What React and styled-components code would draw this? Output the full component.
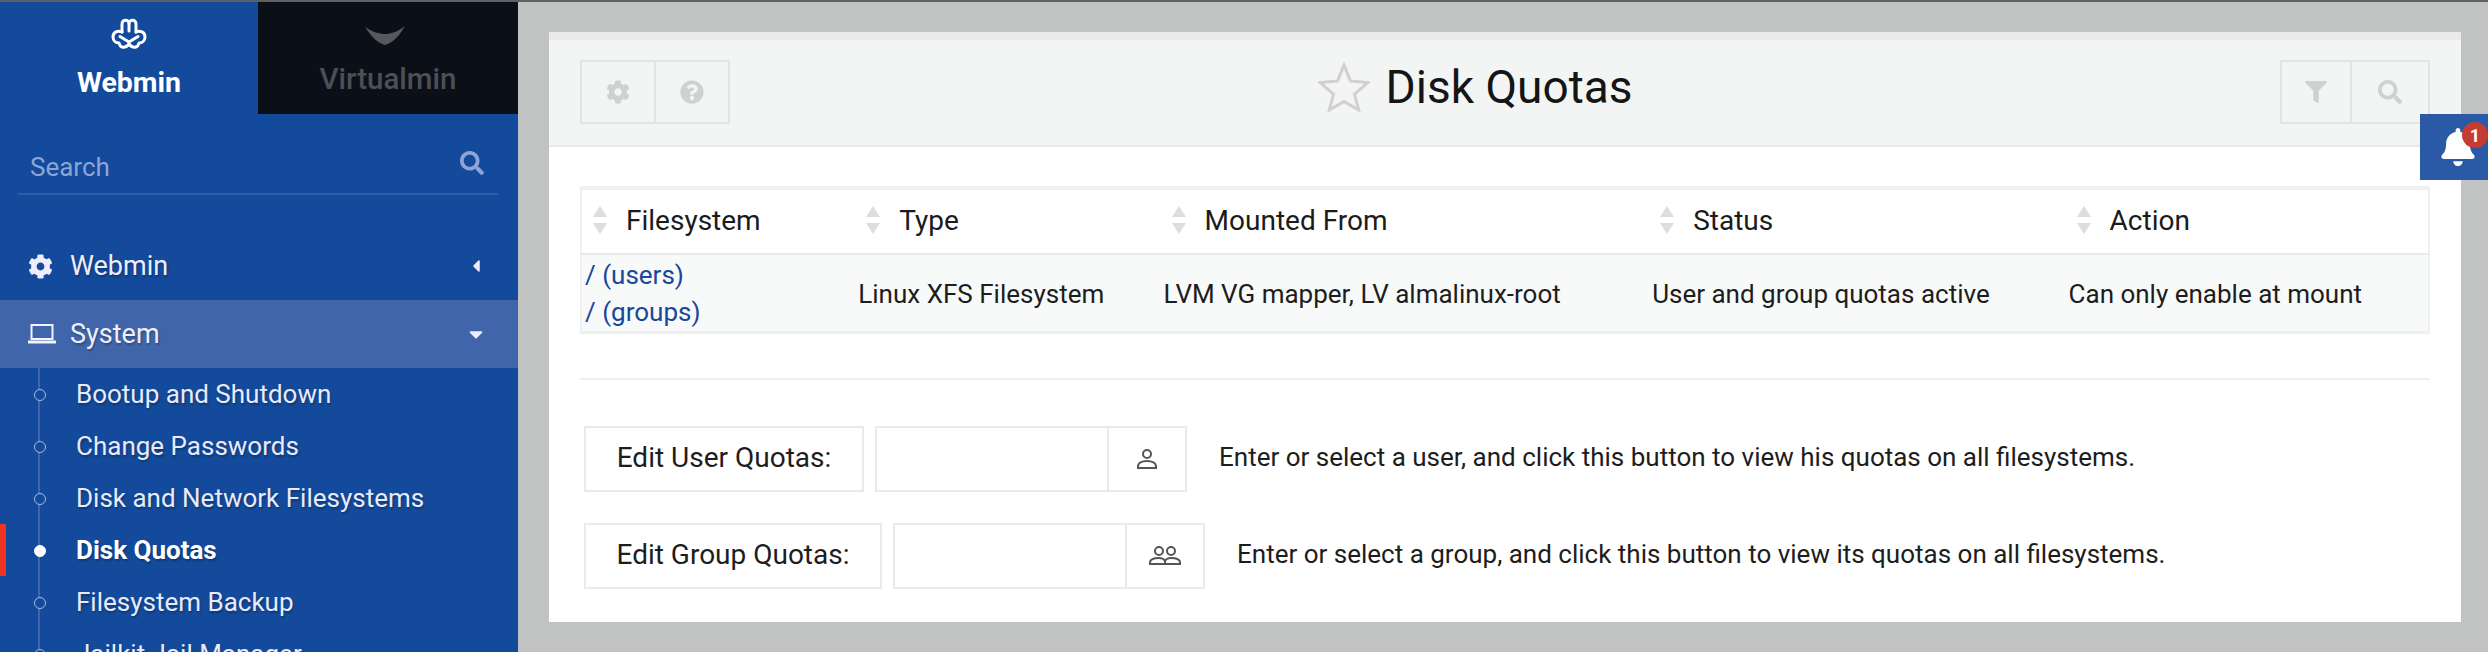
import React from "react";
import styled, { createGlobalStyle } from "styled-components";
import { FaCog, FaQuestionCircle, FaFilter, FaSearch, FaBell, FaCaretLeft, FaCaretDown } from "react-icons/fa";

const GlobalStyle = createGlobalStyle`
  html, body { margin: 0; padding: 0; height: 100%; overflow: hidden; }
  body { font-family: Roboto, "Liberation Sans", sans-serif; background: #c1c3c2; }
  * { box-sizing: border-box; }
`;

const Page = styled.div`
  height: 652px;
  display: flex;
  flex-direction: column;
  overflow: hidden;
`;

const TopStrip = styled.div`
  height: 2px;
  flex: none;
  background: #5e6064;
`;

const Body = styled.div`
  flex: 1;
  display: flex;
  min-height: 0;
  position: relative;
`;

const Sidebar = styled.aside`
  width: 518px;
  flex: none;
  background: #134a9b;
  overflow: hidden;
`;

const Tabs = styled.div`
  display: flex;
  height: 112px;
`;

const Tab = styled.div`
  width: ${(p) => (p.$active ? 258 : 260)}px;
  display: flex;
  flex-direction: column;
  align-items: center;
  padding-top: ${(p) => (p.$active ? 16 : 24)}px;
  background: ${(p) => (p.$active ? "transparent" : "#0b0f17")};
  color: ${(p) => (p.$active ? "#fff" : "#4c4f54")};
  font-size: ${(p) => (p.$active ? 28.5 : 29.5)}px;
  font-weight: ${(p) => (p.$active ? 700 : 500)};
  line-height: 32px;
`;

const TabLabel = styled.span`
  margin-top: ${(p) => p.$gap}px;
`;

const SearchBox = styled.div`
  margin: 0 20px 0 18px;
  height: 81px;
  padding: 39px 14px 0 12px;
  display: flex;
  justify-content: space-between;
  border-bottom: 2px solid #2f5ea8;
  color: #8ea4d6;
  font-size: 26px;
  line-height: 28px;
`;

const SearchGlass = styled(FaSearch)`
  margin-top: -2px;
`;

const MenuList = styled.nav`
  margin-top: 37px;
`;

const MenuRow = styled.div`
  height: 68px;
  display: flex;
  align-items: center;
  padding: 0 35px 0 28px;
  background: ${(p) => (p.$open ? "#4065aa" : "transparent")};
  color: #eeeefb;
  font-size: 27px;
  text-shadow: 1px 2px 2px rgba(0, 0, 0, 0.25);
`;

const MenuIcon = styled.span`
  width: 42px;
  display: flex;
  align-items: center;
`;

const MenuCaret = styled.span`
  margin-left: auto;
  width: 14px;
  display: flex;
  justify-content: center;
`;

const SubList = styled.ul`
  list-style: none;
  margin: 0;
  padding: 0;
`;

const SubItem = styled.li`
  height: 52px;
  display: flex;
  align-items: center;
  position: relative;
  padding-left: 76px;
  color: ${(p) => (p.$active ? "#fff" : "#e9eafa")};
  font-size: 26px;
  font-weight: ${(p) => (p.$active ? 700 : 400)};
  text-shadow: 1px 2px 2px rgba(0, 0, 0, 0.25);
  white-space: nowrap;

  &::before {
    content: "";
    position: absolute;
    left: 38px;
    top: 0;
    bottom: 0;
    width: 2px;
    background: #4065aa;
  }

  &::after {
    content: "";
    position: absolute;
    left: 34px;
    top: 21px;
    width: 10px;
    height: 10px;
    border-radius: 50%;
    border: 1.5px solid #a9b9dc;
    background: ${(p) => (p.$active ? "#fff" : "#134a9b")};
    border-color: ${(p) => (p.$active ? "#fff" : "#a9b9dc")};
  }
`;

const ActiveMark = styled.span`
  position: absolute;
  left: 0;
  top: 0;
  bottom: 0;
  width: 6px;
  background: #f03322;
`;

const Main = styled.main`
  flex: 1;
  padding: 30px 27px 30px 31px;
  min-width: 0;
`;

const Panel = styled.section`
  height: 590px;
  background: #fff;
  border-top: 8px solid #e8e9e8;
`;

const PanelHead = styled.header`
  height: 107px;
  display: grid;
  grid-template-columns: 150px 1fr 150px;
  align-items: center;
  padding: 0 31px;
  background: #f3f5f4;
  border-bottom: 2px solid #e8e9e9;
`;

const ButtonGroup = styled.div`
  display: flex;
  height: 64px;
  margin-top: -1px;
  width: 150px;
  border: 2px solid #e2e3e3;
`;

const HeadButton = styled.button`
  flex: ${(p) => p.$grow || 1};
  display: flex;
  align-items: center;
  justify-content: center;
  padding: 0;
  background: transparent;
  border: 0;
  color: #cfd0d0;

  & + & {
    border-left: 2px solid #e2e3e3;
  }
`;

const Title = styled.h1`
  margin: 0;
  display: flex;
  align-items: center;
  justify-content: center;
  gap: 16px;
  padding: 0 60px 12px 0;
  font-size: 46px;
  font-weight: 400;
  color: #151515;
`;

const PanelBody = styled.div`
  padding: 39px 31px 0;
`;

const Table = styled.table`
  width: 100%;
  table-layout: fixed;
  border-collapse: collapse;
  border-top: 4px solid #f0f0f0;
  border-left: 2px solid #eff0f0;
  border-right: 2px solid #eff0f0;
  border-bottom: 3px solid #eff0f0;
`;

const HeadCell = styled.th`
  height: 66px;
  padding: 0 0 3px 44px;
  position: relative;
  text-align: left;
  font-size: 28px;
  font-weight: 400;
  color: #1b1b1b;
  border-bottom: 2px solid #e9eaea;
`;

const SortIcon = styled.svg`
  position: absolute;
  left: 11px;
  top: 16px;
`;

const BodyCell = styled.td`
  height: 78px;
  padding: 2px 0 0 3px;
  background: #f8faf9;
  font-size: 26px;
  line-height: 36.5px;
  color: #1d1d1d;
`;

const MountLink = styled.a`
  display: block;
  color: #19479b;
`;

const Rule = styled.hr`
  margin: 44px 0 46px;
  border: 0;
  border-top: 2px solid #eeefef;
`;

const QuotaRow = styled.div`
  display: flex;
  align-items: center;
  padding-left: 4px;
  margin-bottom: 31px;
`;

const QuotaButton = styled.button`
  height: 66px;
  width: ${(p) => p.$width}px;
  padding: 0 0 2px;
  background: #fff;
  border: 2px solid #e9eaea;
  font-family: inherit;
  font-size: 28px;
  color: #1d1d1d;
`;

const InputGroup = styled.div`
  margin-left: 11px;
  width: 312px;
  height: 66px;
  display: flex;
  border: 2px solid #e9eaea;
`;

const QuotaInput = styled.input`
  width: 232px;
  border: 0;
  border-right: 2px solid #e9eaea;
  background: #fff;
`;

const PickerIcon = styled.span`
  flex: 1;
  display: flex;
  align-items: center;
  justify-content: center;
`;

const Hint = styled.span`
  margin: -3px 0 0 32px;
  font-size: 26px;
  color: #1d1d1d;
`;

const Bell = styled.div`
  position: absolute;
  right: 0;
  top: 112px;
  width: 68px;
  height: 66px;
  background: #2a5aa5;
  color: #fff;
  display: flex;
  align-items: center;
  justify-content: center;
  padding-left: 8px;
`;

const Badge = styled.span`
  position: absolute;
  left: 42px;
  top: 8px;
  width: 26px;
  height: 26px;
  border-radius: 50%;
  background: #c63c33;
  color: #fff;
  font-size: 18px;
  font-weight: 700;
  display: flex;
  align-items: center;
  justify-content: center;
`;

const Sort = () => (
  <SortIcon width="14" height="30" viewBox="0 0 14 30">
    <path d="M7 0 14 11H0Z" fill="#dddddd" />
    <path d="M0 17H14L7 28Z" fill="#dddddd" />
  </SortIcon>
);

const WebminLogo = () => (
  <svg width="36" height="32" viewBox="0 0 36 32" fill="none" stroke="#fff" strokeWidth="3" strokeLinejoin="round" strokeLinecap="round">
    <path d="M11 14V6C11 1 18 1 18 6V13M18 6C18 1 25 1 25 6V14" />
    <path d="M25 14C29 12 34 14 34 19C34 23 31 25 28 25C27 30 22 31 18 26C14 31 9 30 8 25C5 25 2 23 2 19C2 14 7 12 11 14" />
    <path d="M9 18.500 18 24 27 18.500" />
  </svg>
);

const VirtualminLogo = () => (
  <svg width="40" height="20" viewBox="0 0 40 20" style={{ marginRight: 6 }}>
    <path d="M0 1C8 6 14 8 20 8C26 8 32 6 40 0C34 10 28 17 20 19C12 17 6 10 0 1Z" fill="#55585c" />
  </svg>
);

const LaptopIcon = () => (
  <svg width="28" height="22" viewBox="0 0 28 22" fill="none" stroke="#f2f2fc" strokeWidth="2">
    <rect x="3.500" y="2" width="21" height="14" />
    <path d="M0 19H28" strokeWidth="3" />
  </svg>
);

const StarIcon = () => (
  <svg width="52" height="50" viewBox="0 0 52 50" fill="none" stroke="#d0d0d0" strokeWidth="3" strokeLinejoin="miter">
    <path d="M26 3 32.500 19 50 20.500 36.500 32 40.700 48 26 39.500 11.300 48 15.500 32 2 20.500 19.500 19Z" />
  </svg>
);

const UserIcon = () => (
  <svg width="22" height="20" viewBox="0 0 22 20" fill="none" stroke="#555" strokeWidth="2">
    <circle cx="11" cy="5" r="4" />
    <path d="M2 19V17.500C2 14 6 12 11 12C16 12 20 14 20 17.500V19Z" />
  </svg>
);

const GroupIcon = () => (
  <svg width="32" height="19" viewBox="0 0 32 19" fill="none" stroke="#555" strokeWidth="2">
    <circle cx="10" cy="5" r="4" />
    <circle cx="22" cy="5" r="4" />
    <path d="M1 18V16.500C1 13.500 5 12 10 12C13 12 15 13 16 15C17 13 19 12 22 12C27 12 31 13.500 31 16.500V18Z" />
    <path d="M16 15V18" />
  </svg>
);

const columns = [274, 305, 488, 416, 363];
const heads = ["Filesystem", "Type", "Mounted From", "Status", "Action"];
const menu = ["Bootup and Shutdown", "Change Passwords", "Disk and Network Filesystems", "Disk Quotas", "Filesystem Backup", "Jailkit Jail Manager"];

export default function App() {
  return (
    <Page>
      <GlobalStyle />
      <TopStrip />
      <Body>
        <Sidebar>
          <Tabs>
            <Tab $active>
              <WebminLogo />
              <TabLabel $gap={17}>Webmin</TabLabel>
            </Tab>
            <Tab>
              <VirtualminLogo />
              <TabLabel $gap={17}>Virtualmin</TabLabel>
            </Tab>
          </Tabs>
          <SearchBox>
            Search
            <SearchGlass size={24} />
          </SearchBox>
          <MenuList>
            <MenuRow>
              <MenuIcon><FaCog size={25} /></MenuIcon>
              Webmin
              <MenuCaret><FaCaretLeft size={20} /></MenuCaret>
            </MenuRow>
            <MenuRow $open>
              <MenuIcon><LaptopIcon /></MenuIcon>
              System
              <MenuCaret><FaCaretDown size={22} /></MenuCaret>
            </MenuRow>
            <SubList>
              {menu.map((name) => (
                <SubItem key={name} $active={name === "Disk Quotas"}>
                  {name === "Disk Quotas" && <ActiveMark />}
                  {name}
                </SubItem>
              ))}
            </SubList>
          </MenuList>
        </Sidebar>
        <Main>
          <Panel>
            <PanelHead>
              <ButtonGroup>
                <HeadButton><FaCog size={24} /></HeadButton>
                <HeadButton><FaQuestionCircle size={24} /></HeadButton>
              </ButtonGroup>
              <Title>
                <StarIcon />
                Disk Quotas
              </Title>
              <ButtonGroup>
                <HeadButton $grow={0.95}><FaFilter size={22} /></HeadButton>
                <HeadButton $grow={1.05}><FaSearch size={24} /></HeadButton>
              </ButtonGroup>
            </PanelHead>
            <PanelBody>
              <Table>
                <colgroup>
                  {columns.map((w, i) => <col key={i} style={{ width: w }} />)}
                </colgroup>
                <thead>
                  <tr>
                    {heads.map((h) => (
                      <HeadCell key={h}><Sort />{h}</HeadCell>
                    ))}
                  </tr>
                </thead>
                <tbody>
                  <tr>
                    <BodyCell>
                      <MountLink>/ (users)</MountLink>
                      <MountLink>/ (groups)</MountLink>
                    </BodyCell>
                    <BodyCell>Linux XFS Filesystem</BodyCell>
                    <BodyCell>LVM VG mapper, LV almalinux-root</BodyCell>
                    <BodyCell>User and group quotas active</BodyCell>
                    <BodyCell>Can only enable at mount</BodyCell>
                  </tr>
                </tbody>
              </Table>
              <Rule />
              <QuotaRow>
                <QuotaButton $width={280}>Edit User Quotas:</QuotaButton>
                <InputGroup>
                  <QuotaInput />
                  <PickerIcon><UserIcon /></PickerIcon>
                </InputGroup>
                <Hint>Enter or select a user, and click this button to view his quotas on all filesystems.</Hint>
              </QuotaRow>
              <QuotaRow>
                <QuotaButton $width={298}>Edit Group Quotas:</QuotaButton>
                <InputGroup>
                  <QuotaInput />
                  <PickerIcon><GroupIcon /></PickerIcon>
                </InputGroup>
                <Hint>Enter or select a group, and click this button to view its quotas on all filesystems.</Hint>
              </QuotaRow>
            </PanelBody>
          </Panel>
        </Main>
        <Bell>
          <FaBell size={38} />
          <Badge>1</Badge>
        </Bell>
      </Body>
    </Page>
  );
}
